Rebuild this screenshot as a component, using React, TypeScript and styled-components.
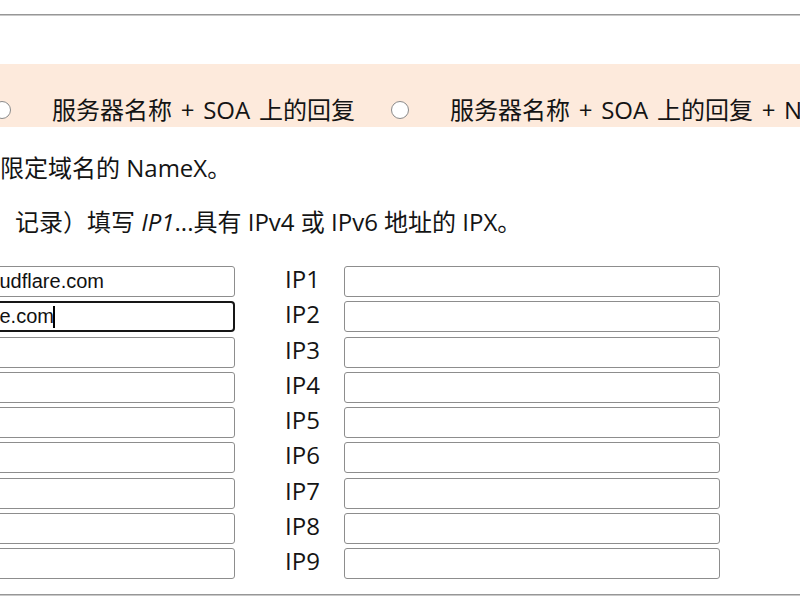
import React from "react";
import styled, { createGlobalStyle } from "styled-components";

const GlobalStyle = createGlobalStyle`
  html, body {
    margin: 0;
    padding: 0;
    background: #ffffff;
    overflow: hidden;
  }
  body {
    font-family: "Open Sans", "Noto Sans CJK SC", sans-serif;
    color: #141414;
  }
`;

const Page = styled.div`
  width: 800px;
  height: 600px;
  padding-top: 14px;
  box-sizing: border-box;
  overflow: hidden;
`;

const Rule = styled.div`
  height: 0;
  border-top: 1px solid #979797;
  border-bottom: 1px solid #c9c9c9;
`;

const Band = styled.div`
  margin-top: 48px;
  height: 63px;
  box-sizing: border-box;
  padding-top: 29px;
  background: #fdeadc;
  display: flex;
  align-items: center;
  white-space: nowrap;
  overflow: hidden;
`;

const Option = styled.label<{ $first?: boolean }>`
  flex: 0 0 398px;
  margin-left: ${(p) => (p.$first ? "-7px" : "0")};
  display: flex;
  align-items: center;
  height: 34px;
  font-size: 24px;
  line-height: 34px;
  word-spacing: 2.5px;
`;

const Radio = styled.input.attrs({ type: "radio" })`
  appearance: none;
  -webkit-appearance: none;
  flex: 0 0 auto;
  width: 18px;
  height: 18px;
  margin: 0 41px 0 0;
  border: 1.5px solid #8a8a8a;
  border-radius: 50%;
  background: #ffffff;
  box-sizing: border-box;
`;

const Para = styled.p<{ $indent?: number; $top: number }>`
  margin: ${(p) => p.$top}px 0 0 ${(p) => p.$indent ?? 0}px;
  font-size: 24px;
  line-height: 34px;
  white-space: nowrap;
`;

const Grid = styled.div`
  margin: 27px 0 0 -4px;
  display: grid;
  grid-template-columns: 239px 109px 376px;
  grid-auto-rows: 31px;
  row-gap: 4.25px;
`;

const Field = styled.input<{ $focus?: boolean; $left?: boolean }>`
  width: 100%;
  height: 31px;
  box-sizing: border-box;
  margin: 0;
  border: ${(p) => (p.$focus ? "2.5px solid #161616" : "1.5px solid #8d8d8d")};
  border-radius: ${(p) => (p.$focus ? "4px" : "3px")};
  padding: 0 4px 0 ${(p) => (p.$focus ? "1.5px" : p.$left ? "2.5px" : "4px")};
  font-family: "Liberation Sans", Arial, sans-serif;
  font-size: 20px;
  color: #111;
  background: #fff;
  outline: none;
`;

const FieldWrap = styled.div`
  position: relative;
`;

const Caret = styled.span`
  position: absolute;
  left: 57px;
  top: 5px;
  width: 1.5px;
  height: 22px;
  background: #000;
`;

const IpLabel = styled.div`
  padding-left: 50px;
  font-size: 24px;
  line-height: 25px;
  white-space: nowrap;
`;

const BottomRule = styled(Rule)`
  margin-top: 15px;
`;

const leftValues = ["udflare.com", "e.com", "", "", "", "", "", "", ""];

export default function App() {
  return (
    <>
      <GlobalStyle />
      <Page>
        <Rule />
        <Band>
          <Option $first>
            <Radio name="mode" />
            <span>服务器名称 + SOA 上的回复</span>
          </Option>
          <Option>
            <Radio name="mode" />
            <span>服务器名称 + SOA 上的回复 + NS</span>
          </Option>
        </Band>
        <Para $top={24}>限定域名的 NameX。</Para>
        <Para $top={20} $indent={15}>
          记录）填写 <i>IP1</i>...具有 IPv4 或 IPv6 地址的 IPX。
        </Para>
        <Grid>
          {leftValues.map((v, i) => (
            <React.Fragment key={i}>
              {i === 1 ? (
                <FieldWrap>
                  <Field $focus $left readOnly value={v} />
                  <Caret />
                </FieldWrap>
              ) : (
                <Field $left readOnly value={v} />
              )}
              <IpLabel>IP{i + 1}</IpLabel>
              <Field readOnly value="" />
            </React.Fragment>
          ))}
        </Grid>
        <BottomRule />
      </Page>
    </>
  );
}
